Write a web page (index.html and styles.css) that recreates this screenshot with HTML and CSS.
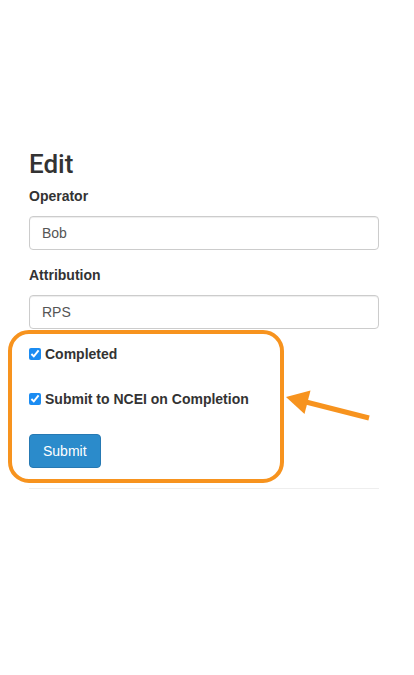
FILE: index.html
```html
<!DOCTYPE html>
<html lang="en">
<head>
<meta charset="utf-8">
<title>Edit</title>
<link rel="stylesheet" href="styles.css">
</head>
<body>
<div class="page">
  <main class="container">
    <h3 class="title">Edit</h3>
    <form class="form">
      <div class="form-group">
        <label class="label" for="op">Operator</label>
        <input class="control" id="op" type="text" value="Bob">
      </div>
      <div class="form-group">
        <label class="label" for="attr">Attribution</label>
        <input class="control" id="attr" type="text" value="RPS">
      </div>
      <div class="checkbox">
        <label class="check-label"><input class="check" type="checkbox" checked>Completed</label>
      </div>
      <div class="checkbox">
        <label class="check-label"><input class="check" type="checkbox" checked>Submit to NCEI on Completion</label>
      </div>
      <button class="btn" type="button">Submit</button>
    </form>
    <hr class="rule">
  </main>
  <svg class="annotation" width="414" height="675" viewBox="0 0 414 675" aria-hidden="true">
    <rect x="10" y="332" width="272" height="149" rx="19" ry="19" fill="none" stroke="#f7931e" stroke-width="4"/>
    <line x1="369" y1="418" x2="302" y2="401" stroke="#f7931e" stroke-width="5"/>
    <polygon points="286,397 310.5,390.5 304.5,414" fill="#f7931e"/>
  </svg>
</div>
</body>
</html>
```
FILE: styles.css
```css
* { box-sizing: border-box; }
html, body { margin: 0; padding: 0; background: #fff; }
body {
  font-family: "Liberation Sans", Arial, Helvetica, sans-serif;
  font-size: 14px;
  line-height: 20px;
  color: #333;
}
.page {
  position: relative;
  width: 414px;
  height: 675px;
  overflow: hidden;
}
.container {
  width: 350px;
  margin-left: 29px;
  padding-top: 150px;
}
.title {
  margin: 0 0 7px;
  font-family: Roboto, "Liberation Sans", Arial, sans-serif;
  font-weight: 500;
  font-size: 26px;
  line-height: 1.1;
  color: #333;
}
.form { margin: 0; }
.form-group { margin-bottom: 15px; }
.label {
  display: block;
  font-weight: bold;
  line-height: 20px;
  margin-bottom: 10px;
}
.control {
  display: block;
  width: 100%;
  height: 34px;
  padding: 6px 12px;
  font-family: inherit;
  font-size: 14px;
  line-height: 20px;
  color: #555;
  background: #fff;
  border: 1px solid #ccc;
  border-radius: 4px;
  box-shadow: inset 0 1px 1px rgba(0,0,0,0.075);
  outline: none;
}
.checkbox { margin-bottom: 25px; }
.check-label {
  display: flex;
  align-items: center;
  font-weight: bold;
  line-height: 20px;
}
.check {
  width: 12px;
  height: 12px;
  margin: 0 4px 0 0;
  accent-color: #1b8cf2;
}
.btn {
  display: block;
  height: 34px;
  padding: 6px 13px;
  font-family: inherit;
  font-size: 14px;
  line-height: 20px;
  color: #fff;
  background: #2b8bcb;
  border: 1px solid #2679b3;
  border-radius: 4px;
}
.rule {
  margin: 20px 0 0;
  border: 0;
  border-top: 1px solid #eee;
}
.annotation {
  position: absolute;
  top: 0;
  left: 0;
  pointer-events: none;
}
```
